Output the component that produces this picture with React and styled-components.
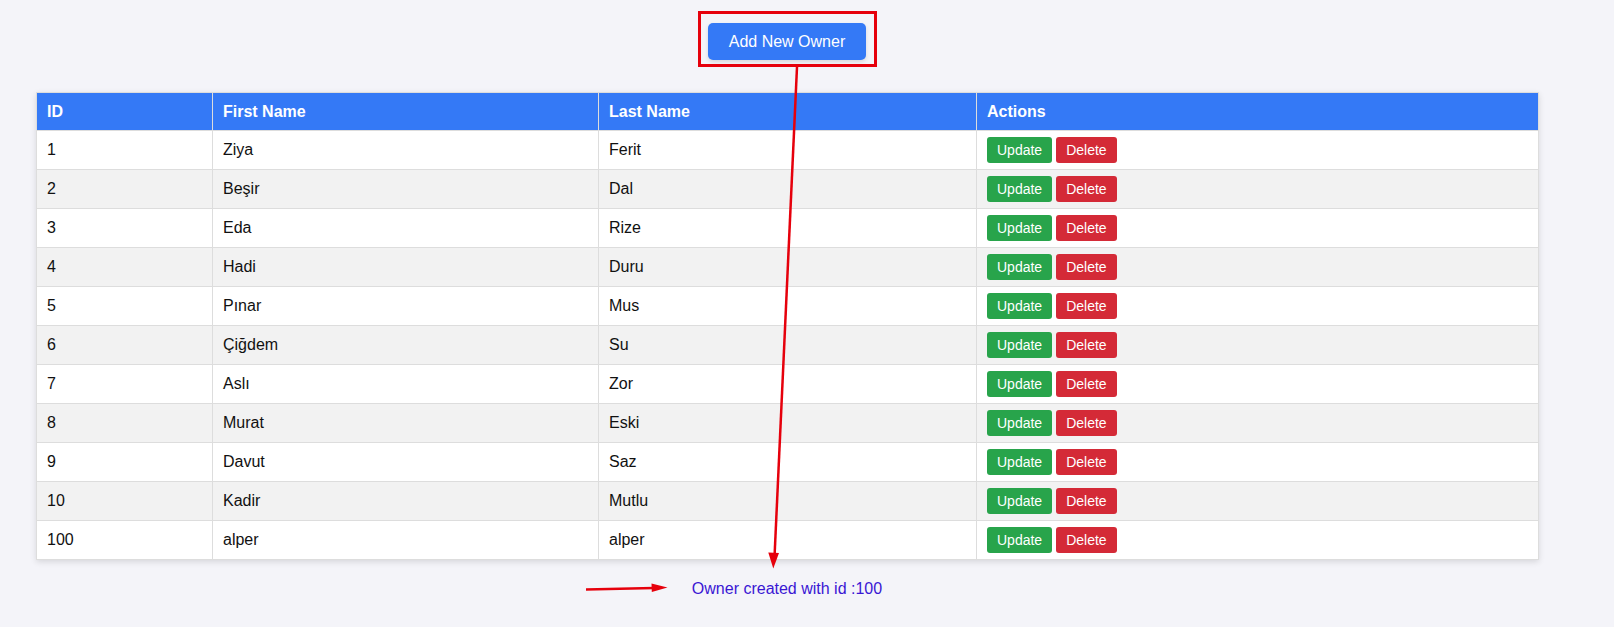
import React from "react";
import styled, { createGlobalStyle } from "styled-components";

const GlobalStyle = createGlobalStyle`
  html, body {
    margin: 0;
    padding: 0;
    background: #f4f4f9;
    font-family: "Liberation Sans", Arial, sans-serif;
  }
`;

const Page = styled.div`
  position: relative;
  box-sizing: border-box;
  min-height: 627px;
  width: 1614px;
  padding: 23px 0 0 36px;
`;

const Container = styled.div`
  width: 1502px;
  display: flex;
  flex-direction: column;
`;

const Toolbar = styled.div`
  display: flex;
  justify-content: center;
`;

const PrimaryButton = styled.button`
  font-family: inherit;
  font-size: 16px;
  line-height: 19px;
  padding: 9px 21px;
  color: #fff;
  background: #3479f6;
  border: none;
  border-radius: 5px;
  box-shadow: 0 2px 4px rgba(0, 0, 0, 0.12);
  cursor: pointer;
`;

const Table = styled.table`
  margin-top: 32px;
  width: 1502px;
  table-layout: fixed;
  border-collapse: collapse;
  background: #fff;
  box-shadow: 0 2px 6px rgba(0, 0, 0, 0.12);
`;

const Col = styled.col`
  width: ${(p) => p.$w}px;
`;

const Th = styled.th`
  background: #3479f6;
  color: #fff;
  font-weight: bold;
  font-size: 16px;
  line-height: 18px;
  text-align: left;
  padding: 10px 10px 9px;
  border: 1px solid #ddd;
`;

const Row = styled.tr`
  background: ${(p) => (p.$alt ? "#f2f2f2" : "#fff")};
`;

const Td = styled.td`
  font-size: 16px;
  line-height: 18px;
  color: #111;
  padding: 6px 10px;
  border: 1px solid #ddd;
  vertical-align: middle;
`;

const Actions = styled.div`
  display: flex;
  gap: 4px;
`;

const SmallButton = styled.button`
  font-family: inherit;
  font-size: 14px;
  line-height: 16px;
  padding: 5px 10px;
  color: #fff;
  background: ${(p) => (p.$variant === "danger" ? "#d42a37" : "#28a44b")};
  border: none;
  border-radius: 3px;
  cursor: pointer;
`;

const Message = styled.p`
  margin: 20px 0 0;
  text-align: center;
  font-size: 16px;
  line-height: 18px;
  color: #3a17d4;
`;

const Overlay = styled.svg`
  position: absolute;
  top: 0;
  left: 0;
  pointer-events: none;
`;

const owners = [
  [1, "Ziya", "Ferit"],
  [2, "Beşir", "Dal"],
  [3, "Eda", "Rize"],
  [4, "Hadi", "Duru"],
  [5, "Pınar", "Mus"],
  [6, "Çiğdem", "Su"],
  [7, "Aslı", "Zor"],
  [8, "Murat", "Eski"],
  [9, "Davut", "Saz"],
  [10, "Kadir", "Mutlu"],
  [100, "alper", "alper"],
];

const RED = "#e6000c";

export default function App() {
  return (
    <>
      <GlobalStyle />
      <Page>
        <Container>
          <Toolbar>
            <PrimaryButton>Add New Owner</PrimaryButton>
          </Toolbar>
          <Table>
            <colgroup>
              <Col $w={176} />
              <Col $w={386} />
              <Col $w={378} />
              <Col $w={562} />
            </colgroup>
            <thead>
              <tr>
                <Th>ID</Th>
                <Th>First Name</Th>
                <Th>Last Name</Th>
                <Th>Actions</Th>
              </tr>
            </thead>
            <tbody>
              {owners.map(([id, first, last], i) => (
                <Row key={id} $alt={i % 2 === 1}>
                  <Td>{id}</Td>
                  <Td>{first}</Td>
                  <Td>{last}</Td>
                  <Td>
                    <Actions>
                      <SmallButton>Update</SmallButton>
                      <SmallButton $variant="danger">Delete</SmallButton>
                    </Actions>
                  </Td>
                </Row>
              ))}
            </tbody>
          </Table>
          <Message>Owner created with id :100</Message>
        </Container>
        <Overlay width="1614" height="627" viewBox="0 0 1614 627">
          <rect x="699.5" y="12.5" width="176" height="53" fill="none" stroke={RED} strokeWidth="3" />
          <line x1="797" y1="67" x2="774.6" y2="555" stroke={RED} strokeWidth="2.5" />
          <polygon points="773.3,568.5 768.3,552.5 779,553" fill={RED} />
          <line x1="586" y1="589.5" x2="654" y2="588" stroke={RED} strokeWidth="2.5" />
          <polygon points="667.5,587.6 651.5,583.6 651.8,592" fill={RED} />
        </Overlay>
      </Page>
    </>
  );
}
